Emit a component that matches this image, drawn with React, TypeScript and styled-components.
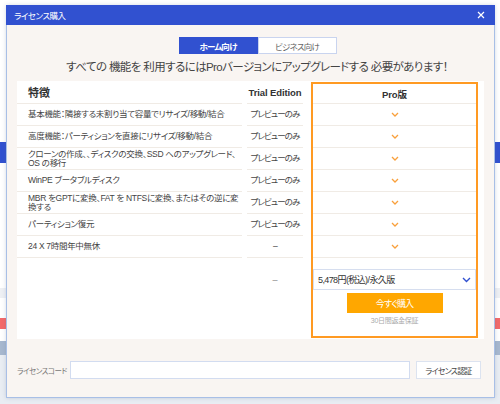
import styled, { createGlobalStyle } from "styled-components";

const GlobalStyle = createGlobalStyle`
  html, body {
    margin: 0;
    padding: 0;
  }
  body {
    font-family: "Liberation Sans", "Noto Sans CJK JP", sans-serif;
    font-feature-settings: "palt";
    color: #333;
  }
`;

const Page = styled.div`
  position: relative;
  width: 500px;
  height: 404px;
  overflow: hidden;
  background: #ffffff;
`;

// the application window behind the dialog
const Backdrop = styled.div`
  display: flex;
  flex-direction: column;
  height: 100%;
`;

const Stripe = styled.div<{ $h: number; $c: string }>`
  height: ${(p) => p.$h}px;
  background: ${(p) => p.$c};
  flex-shrink: 0;
`;

const Dialog = styled.div`
  position: absolute;
  left: 6px;
  top: 5px;
  width: 489px;
  height: 393px;
  box-sizing: border-box;
  border: 1px solid #a8bfe6;
  border-top: none;
  background: #f9f5f2;
  display: flex;
  flex-direction: column;
  box-shadow: 0 0 4px rgba(80, 100, 140, 0.25);
`;

const TitleBar = styled.div`
  height: 20px;
  background: #3151d0;
  color: #fff;
  display: flex;
  align-items: center;
  justify-content: space-between;
  padding: 0 10px 0 8px;
  font-size: 8.5px;
  letter-spacing: -0.5px;
  margin: 0 -1px;
`;

const Close = styled.svg`
  width: 8px;
  height: 8px;
`;

const Body = styled.div`
  display: flex;
  flex-direction: column;
  padding: 12px 3px 0 10px;
`;

const Tabs = styled.div`
  display: flex;
  justify-content: center;
  margin-left: 7px;
`;

const Tab = styled.div<{ $active?: boolean }>`
  width: 79px;
  height: 17px;
  box-sizing: border-box;
  display: flex;
  align-items: center;
  justify-content: center;
  font-size: 8.5px;
  letter-spacing: -0.8px;
  font-weight: ${(p) => (p.$active ? 700 : 400)};
  color: ${(p) => (p.$active ? "#fff" : "#666")};
  background: ${(p) => (p.$active ? "#3151d0" : "#fff")};
  border: 1px solid ${(p) => (p.$active ? "#3151d0" : "#c9d4ef")};
`;

const Heading = styled.div`
  text-align: center;
  font-size: 11.5px;
  letter-spacing: -0.6px;
  color: #444;
  margin: 4px 0 0 6px;
  height: 19px;
  line-height: 19px;
  white-space: nowrap;
`;

const Panel = styled.div`
  margin-top: 4px;
  width: 467px;
  height: 258px;
  background: #fff;
  display: grid;
  grid-template-columns: 225px 56px 170px;
  column-gap: 5px;
  align-items: start;
`;

const Column = styled.div`
  display: flex;
  flex-direction: column;
`;

const ProColumn = styled.div`
  margin: 1px 0 0 3px;
  height: 256px;
  box-sizing: border-box;
  border: 2px solid #ff9a22;
  display: flex;
  flex-direction: column;
`;

const HeadCell = styled.div<{ $h?: number }>`
  height: ${(p) => p.$h ?? 23}px;
  box-sizing: border-box;
  border-bottom: 1px solid #f0ebe5;
  display: flex;
  align-items: center;
  justify-content: center;
  font-weight: 700;
  font-size: 9.5px;
  letter-spacing: -0.1px;
  white-space: nowrap;
  color: #333;
`;

const FeatureHead = styled(HeadCell)`
  justify-content: flex-start;
  padding-left: 11px;
  font-size: 11px;
`;

const Cell = styled.div<{ $left?: boolean }>`
  height: 22px;
  box-sizing: border-box;
  border-bottom: 1px solid #f0ebe5;
  display: flex;
  align-items: center;
  justify-content: ${(p) => (p.$left ? "flex-start" : "center")};
  padding: ${(p) => (p.$left ? "0 1px 0 11px" : "0")};
  font-size: 8.5px;
  line-height: 8.5px;
  letter-spacing: ${(p) => (p.$left ? "-0.3px" : "-0.9px")};
  white-space: ${(p) => (p.$left ? "normal" : "nowrap")};
  color: #444;
`;

const Dash = styled.div<{ $h: number }>`
  height: ${(p) => p.$h}px;
  display: flex;
  align-items: center;
  justify-content: center;
  color: #888;
  font-size: 9px;
`;

const Check = styled.svg`
  width: 8px;
  height: 5px;
`;

const PriceArea = styled.div`
  display: flex;
  flex-direction: column;
  align-items: center;
  padding-top: 11px;
`;

const Select = styled.div`
  width: 163px;
  height: 21px;
  box-sizing: border-box;
  border: 1px solid #d6deef;
  background: #fff;
  display: flex;
  align-items: center;
  justify-content: space-between;
  padding: 0 4px;
  font-size: 9px;
  letter-spacing: -0.6px;
  color: #333;
`;

const Chevron = styled.svg`
  width: 9px;
  height: 6px;
`;

const BuyButton = styled.div`
  margin-top: 3px;
  width: 96px;
  height: 20px;
  background: #ffa700;
  color: #fff;
  font-size: 9px;
  letter-spacing: -0.9px;
  display: flex;
  align-items: center;
  justify-content: center;
`;

const Note = styled.div`
  margin-top: 2px;
  font-size: 7px;
  letter-spacing: -0.3px;
  color: #aaa;
`;

const Footer = styled.div`
  display: flex;
  align-items: center;
  margin-top: 22px;
  height: 18px;
`;

const Label = styled.div`
  width: 53px;
  font-size: 7.5px;
  letter-spacing: -0.5px;
  color: #777;
  white-space: nowrap;
`;

const Input = styled.div`
  width: 340px;
  height: 18px;
  box-sizing: border-box;
  background: #fff;
  border: 1px solid #d2dcf0;
`;

const AuthButton = styled.div`
  margin-left: 6px;
  width: 65px;
  height: 18px;
  box-sizing: border-box;
  background: #fff;
  border: 1px solid #dce3f0;
  font-size: 8px;
  letter-spacing: -0.8px;
  color: #444;
  display: flex;
  align-items: center;
  justify-content: center;
`;

const features = [
  "基本機能：隣接する未割り当て容量でリサイズ/移動/結合",
  "高度機能：パーティションを直接にリサイズ/移動/結合",
  "クローンの作成、、ディスクの交換、SSD へのアップグレード、OS の移行",
  "WinPE ブータブルディスク",
  "MBR をGPTに変換、FAT を NTFSに変換、またはその逆に変換する",
  "パーティション復元",
  "24 X 7時間年中無休",
];

const CheckMark = () => (
  <Check viewBox="0 0 8 5">
    <polyline points="1,1 4,4 7,1" fill="none" stroke="#f9a03c" strokeWidth="1.3" />
  </Check>
);

const App = () => {
  return (
    <Page>
      <GlobalStyle />
      <Backdrop>
        <Stripe $h={142} $c="#ffffff" />
        <Stripe $h={21} $c="#3151d0" />
        <Stripe $h={125} $c="#ffffff" />
        <Stripe $h={10} $c="#eef0f4" />
        <Stripe $h={20} $c="#ffffff" />
        <Stripe $h={11} $c="#f46a6a" />
        <Stripe $h={12} $c="#ffffff" />
        <Stripe $h={14} $c="#a7b8cf" />
        <Stripe $h={49} $c="#e9edf3" />
      </Backdrop>
      <Dialog>
        <TitleBar>
          <span>ライセンス購入</span>
          <Close viewBox="0 0 8 8">
            <path d="M1 1 L7 7 M7 1 L1 7" stroke="#fff" strokeWidth="1.2" />
          </Close>
        </TitleBar>
        <Body>
          <Tabs>
            <Tab $active>ホーム向け</Tab>
            <Tab>ビジネス向け</Tab>
          </Tabs>
          <Heading>
            すべての 機能を 利用するにはProバージョンにアップグレードする 必要があります！
          </Heading>
          <Panel>
            <Column>
              <FeatureHead>特徴</FeatureHead>
              {features.map((f) => (
                <Cell $left key={f}>
                  {f}
                </Cell>
              ))}
            </Column>
            <Column>
              <HeadCell>Trial Edition</HeadCell>
              {features.slice(0, 6).map((f) => (
                <Cell key={f}>プレビューのみ</Cell>
              ))}
              <Cell>–</Cell>
              <Dash $h={44}>–</Dash>
            </Column>
            <ProColumn>
              <HeadCell $h={20}>Pro版</HeadCell>
              {features.map((f) => (
                <Cell key={f}>
                  <CheckMark />
                </Cell>
              ))}
              <PriceArea>
                <Select>
                  <span>5,478円(税込)/永久版</span>
                  <Chevron viewBox="0 0 9 6">
                    <polyline points="1,1 4.5,4.5 8,1" fill="none" stroke="#3151d0" strokeWidth="1.4" />
                  </Chevron>
                </Select>
                <BuyButton>今すぐ購入</BuyButton>
                <Note>30日間返金保証</Note>
              </PriceArea>
            </ProColumn>
          </Panel>
          <Footer>
            <Label>ライセンスコード</Label>
            <Input />
            <AuthButton>ライセンス認証</AuthButton>
          </Footer>
        </Body>
      </Dialog>
    </Page>
  );
};

export default App;
